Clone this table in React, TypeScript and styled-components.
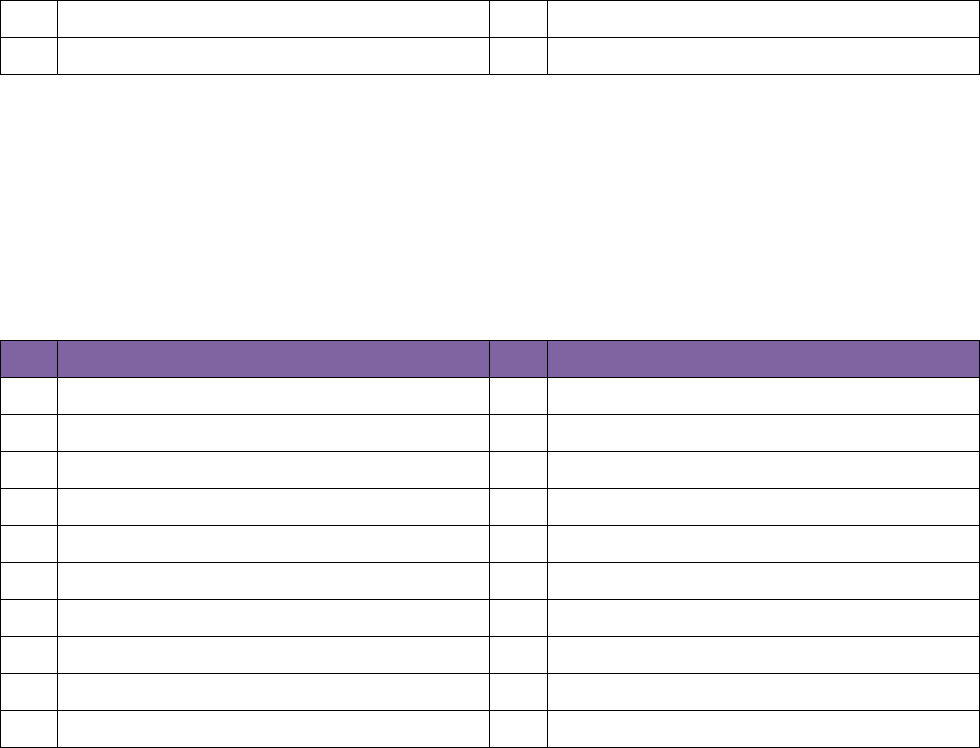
import styled, { createGlobalStyle } from 'styled-components';

const GlobalStyle = createGlobalStyle`
  html, body {
    margin: 0;
    padding: 0;
    background: #ffffff;
    font-family: "Liberation Sans", Arial, sans-serif;
  }
`;

const Page = styled.div`
  width: 980px;
  display: flex;
  flex-direction: column;
  gap: 265px;
`;

const Table = styled.div`
  display: grid;
  grid-template-columns: 57px 432px 58px 432px;
  grid-auto-rows: 37px;
  border-top: 1px solid #000;
  border-left: 1px solid #000;
  width: 980px;
  box-sizing: border-box;
`;

const Cell = styled.div<{ $head?: boolean }>`
  box-sizing: border-box;
  border-right: 1px solid #000;
  border-bottom: 1px solid #000;
  background: ${(p) => (p.$head ? '#8064a2' : '#ffffff')};
`;

function Row({ head }: { head?: boolean }) {
  return (
    <>
      <Cell $head={head} />
      <Cell $head={head} />
      <Cell $head={head} />
      <Cell $head={head} />
    </>
  );
}

export default function App() {
  return (
    <>
      <GlobalStyle />
      <Page>
        <Table>
          <Row />
          <Row />
        </Table>
        <Table>
          <Row head />
          {Array.from({ length: 10 }).map((_, i) => (
            <Row key={i} />
          ))}
        </Table>
      </Page>
    </>
  );
}
